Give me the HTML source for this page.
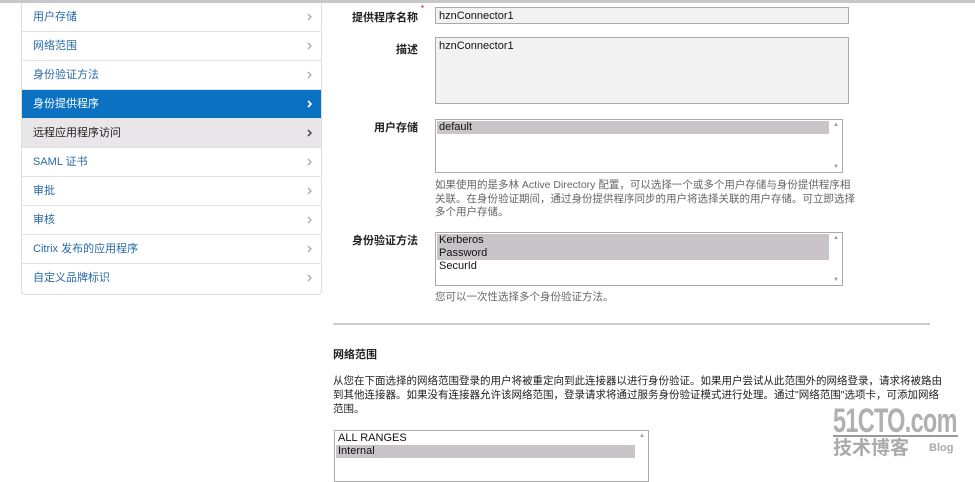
<!DOCTYPE html>
<html><head><meta charset="utf-8"><style>
*{box-sizing:border-box;margin:0;padding:0}
body{width:975px;height:478px;overflow:hidden;background:#fff;font-family:"Liberation Sans","Noto Sans CJK SC",sans-serif;position:relative;color:#222}
.topline{position:absolute;left:0;top:0;width:975px;height:3px;background:#c8c8c8}
.side{position:absolute;left:21px;top:3px;width:301px;height:292px;border:1px solid #ddd;border-top:none;border-radius:0 0 4px 4px;background:#fff}
.row{height:29px;border-bottom:1px solid #e2e2e2;font-size:11px;color:#2a6aa8;padding-left:11px;line-height:29px;position:relative}
.row svg{position:absolute;right:9px;top:10px}
.row.act{background:#0a72c0;color:#fff}
.row.hov{background:#e8e6e8;color:#222}
.row:last-child{border-bottom:none}
.lbl{position:absolute;font-size:11px;font-weight:bold;color:#222;text-align:right;width:120px;left:298px}
.box{position:absolute;border:1px solid #aaa;background:#fff;font-size:11px;color:#111;overflow:hidden}
.sel div.o{height:13px;line-height:13px;padding-left:2px;margin-right:12px}
.sel .h{background:#c8c4c8}
.up,.dn{position:absolute;right:3px;font-size:6px;color:#999}
.up{top:2px}.dn{bottom:2px}
.help{position:absolute;font-size:10.5px;color:#666;line-height:13.5px}
</style></head><body>
<div class="topline"></div>
<div class="side">
<div class="row">用户存储<svg width="5" height="8"><path d="M1 1l3 3-3 3" stroke="#aaa" fill="none" stroke-width="1.3"/></svg></div>
<div class="row">网络范围<svg width="5" height="8"><path d="M1 1l3 3-3 3" stroke="#aaa" fill="none" stroke-width="1.3"/></svg></div>
<div class="row">身份验证方法<svg width="5" height="8"><path d="M1 1l3 3-3 3" stroke="#aaa" fill="none" stroke-width="1.3"/></svg></div>
<div class="row act">身份提供程序<svg width="5" height="8"><path d="M1 1l3 3-3 3" stroke="#fff" fill="none" stroke-width="1.8"/></svg></div>
<div class="row hov">远程应用程序访问<svg width="5" height="8"><path d="M1 1l3 3-3 3" stroke="#555" fill="none" stroke-width="1.6"/></svg></div>
<div class="row">SAML 证书<svg width="5" height="8"><path d="M1 1l3 3-3 3" stroke="#aaa" fill="none" stroke-width="1.3"/></svg></div>
<div class="row">审批<svg width="5" height="8"><path d="M1 1l3 3-3 3" stroke="#aaa" fill="none" stroke-width="1.3"/></svg></div>
<div class="row">审核<svg width="5" height="8"><path d="M1 1l3 3-3 3" stroke="#aaa" fill="none" stroke-width="1.3"/></svg></div>
<div class="row">Citrix 发布的应用程序<svg width="5" height="8"><path d="M1 1l3 3-3 3" stroke="#aaa" fill="none" stroke-width="1.3"/></svg></div>
<div class="row">自定义品牌标识<svg width="5" height="8"><path d="M1 1l3 3-3 3" stroke="#aaa" fill="none" stroke-width="1.3"/></svg></div>
</div>
<div class="lbl" style="top:9px">提供程序名称</div><span style="position:absolute;left:421px;top:4px;color:#c00;font-size:8px">*</span>
<div class="box" style="left:435px;top:7px;width:414px;height:17px;background:#f2f2f2;padding:1px 3px;line-height:14px">hznConnector1</div>
<div class="lbl" style="top:41px">描述</div>
<div class="box" style="left:435px;top:37px;width:414px;height:67px;background:#f2f2f2;padding:2px 3px">hznConnector1</div>
<div class="lbl" style="top:119px">用户存储</div>
<div class="box sel" style="left:435px;top:119px;width:408px;height:54px;padding:1px"><div class="o h">default</div><span class="up">▲</span><span class="dn">▼</span></div>
<div class="help" style="left:435px;top:179px;width:422px">如果使用的是多林 Active Directory 配置，可以选择一个或多个用户存储与身份提供程序相关联。在身份验证期间，通过身份提供程序同步的用户将选择关联的用户存储。可立即选择多个用户存储。</div>
<div class="lbl" style="top:232px">身份验证方法</div>
<div class="box sel" style="left:435px;top:232px;width:408px;height:54px;padding:1px"><div class="o h">Kerberos</div><div class="o h">Password</div><div class="o">SecurId</div><span class="up">▲</span><span class="dn">▼</span></div>
<div class="help" style="left:435px;top:291px">您可以一次性选择多个身份验证方法。</div>
<div style="position:absolute;left:333px;top:323px;width:597px;height:2px;background:#ccc"></div>
<div style="position:absolute;left:333px;top:346px;font-size:11px;font-weight:bold">网络范围</div>
<div style="position:absolute;left:333px;top:374px;width:610px;font-size:10.5px;line-height:14px;color:#222">从您在下面选择的网络范围登录的用户将被重定向到此连接器以进行身份验证。如果用户尝试从此范围外的网络登录，请求将被路由到其他连接器。如果没有连接器允许该网络范围，登录请求将通过服务身份验证模式进行处理。通过"网络范围"选项卡，可添加网络范围。</div>
<div class="box sel" style="left:334px;top:430px;width:315px;height:52px;padding:1px"><div class="o">ALL RANGES</div><div class="o h">Internal</div><span class="up">▲</span></div>
<div style="position:absolute;left:833px;top:402px;font-size:34px;font-weight:bold;color:#b0b0b0;letter-spacing:-1px;transform:scaleX(0.69);transform-origin:left;font-family:'Liberation Sans Narrow','Liberation Sans',sans-serif">51CTO.com</div>
<div style="position:absolute;left:833px;top:435px;width:125px;height:2px;background:#999"></div>
<div style="position:absolute;left:833px;top:438px;font-size:19px;line-height:22px;color:#aaa;font-weight:bold">技术博客</div>
<div style="position:absolute;left:929px;top:442px;font-size:11px;color:#aaa;font-weight:bold">Blog</div>
</body></html>
